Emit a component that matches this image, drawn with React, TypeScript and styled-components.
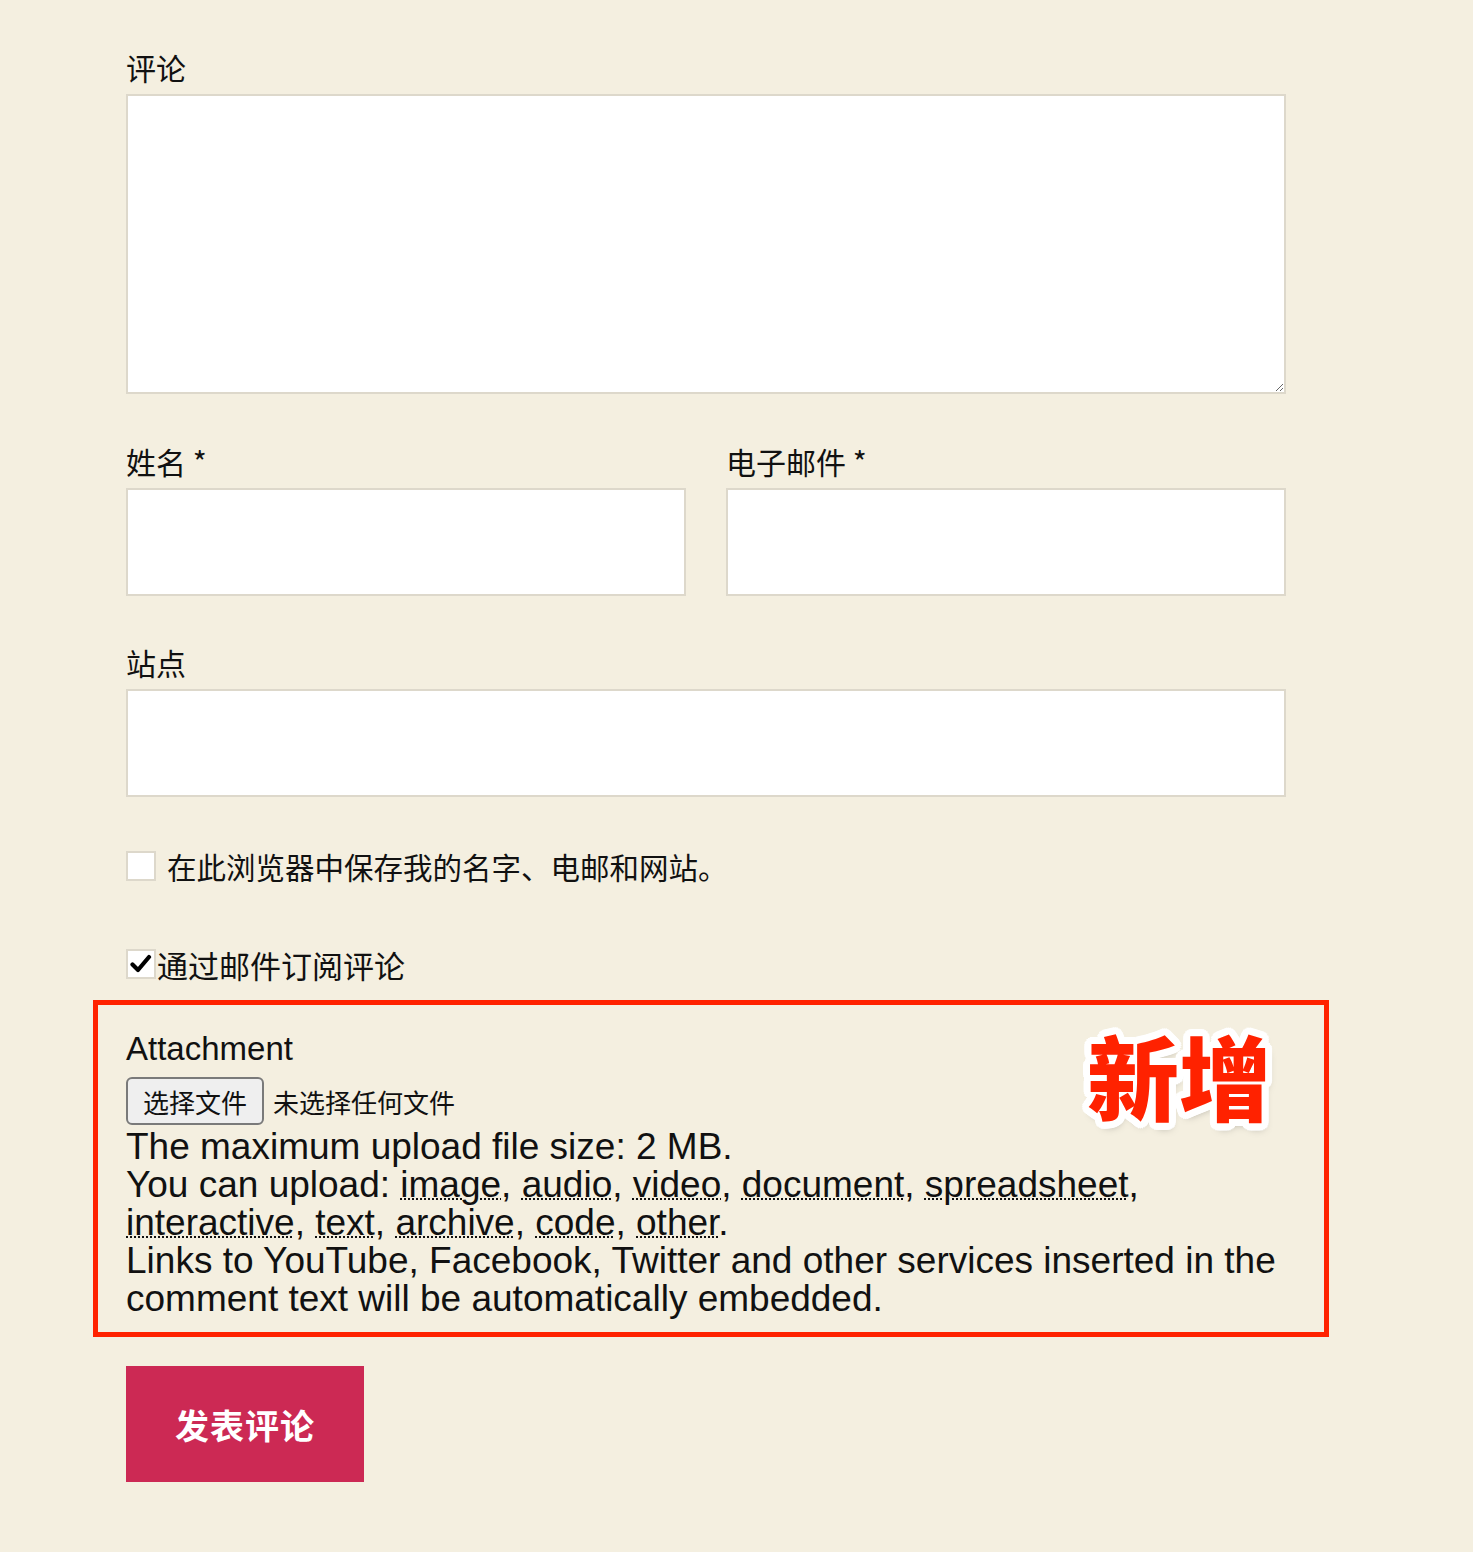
import styled, { createGlobalStyle } from 'styled-components'

const CJK = `"Noto Sans CJK SC", "Noto Sans", sans-serif`
const LATIN = `"Liberation Sans", "Noto Sans CJK SC", sans-serif`

const GlobalStyle = createGlobalStyle`
  html, body {
    margin: 0;
    padding: 0;
    background: #f4efe0;
  }
  body {
    font-family: ${CJK};
    color: #111;
  }
`

const stickerOutline = (() => {
  const parts: string[] = []
  for (let i = 0; i < 24; i++) {
    const a = (i / 24) * Math.PI * 2
    parts.push(`${(Math.cos(a) * 7).toFixed(1)}px ${(Math.sin(a) * 7).toFixed(1)}px 0 #fff`)
  }
  parts.push('2px 5px 8px rgba(0, 0, 0, 0.35)')
  return parts.join(', ')
})()

const uploadTypes = ['image', 'audio', 'video', 'document', 'spreadsheet', 'interactive', 'text', 'archive', 'code', 'other']

export default function App() {
  return (
    <>
      <GlobalStyle />
      <Page>
        <Form>
          <Field>
            <Label>评论</Label>
            <TextArea />
          </Field>

          <Row>
            <Field>
              <Label>姓名 *</Label>
              <Input />
            </Field>
            <Field>
              <Label>电子邮件 *</Label>
              <Input />
            </Field>
          </Row>

          <Field $spaced>
            <Label>站点</Label>
            <Input />
          </Field>

          <CheckRow $first>
            <Box />
            <CheckText>在此浏览器中保存我的名字、电邮和网站。</CheckText>
          </CheckRow>

          <CheckRow>
            <Box>
              <svg width="22" height="20" viewBox="0 0 22 20">
                <path d="M2.5 10.5 L8 16 L19 3" fill="none" stroke="#000" strokeWidth="4.2" strokeLinecap="round" strokeLinejoin="round" />
              </svg>
            </Box>
            <CheckText $tight>通过邮件订阅评论</CheckText>
          </CheckRow>

          <Attachment>
            <Sticker>新增</Sticker>
            <AttachTitle>Attachment</AttachTitle>
            <FileRow>
              <FileButton type="button">选择文件</FileButton>
              <FileName>未选择任何文件</FileName>
            </FileRow>
            <Note>
              The maximum upload file size: 2 MB.
              <br />
              You can upload:{' '}
              {uploadTypes.map((t, i) => (
                <span key={t}>
                  <Abbr title={t}>{t}</Abbr>
                  {i < uploadTypes.length - 1 ? ', ' : '.'}
                </span>
              ))}
              <br />
              Links to YouTube, Facebook, Twitter and other services inserted in the comment text will be automatically embedded.
            </Note>
          </Attachment>

          <Submit type="button">发表评论</Submit>
        </Form>
      </Page>
    </>
  )
}

const Page = styled.div`
  padding: 48px 0 70px 126px;
`

const Form = styled.div`
  width: 1160px;
  display: flex;
  flex-direction: column;
`

const Field = styled.div<{ $spaced?: boolean }>`
  display: flex;
  flex-direction: column;
  flex: 1;
  margin-top: ${({ $spaced }) => ($spaced ? '47px' : '0')};
`

const Row = styled.div`
  display: flex;
  gap: 40px;
  margin-top: 48px;
`

const Label = styled.label`
  font-size: 30px;
  line-height: 39px;
  margin-bottom: 7px;
  font-family: ${CJK};
`

const TextArea = styled.textarea`
  box-sizing: border-box;
  height: 300px;
  width: 100%;
  background: #fff;
  border: 2px solid #ddd8cb;
  resize: vertical;
  outline: none;
  margin: 0;
`

const Input = styled.input`
  box-sizing: border-box;
  height: 108px;
  width: 100%;
  background: #fff;
  border: 2px solid #ddd8cb;
  outline: none;
  margin: 0;
`

const CheckRow = styled.div<{ $first?: boolean }>`
  display: flex;
  align-items: center;
  height: 40px;
  margin-top: ${({ $first }) => ($first ? '49px' : '58px')};
`

const Box = styled.span`
  box-sizing: border-box;
  width: 30px;
  height: 30px;
  background: #fff;
  border: 2px solid #ddd8cb;
  display: flex;
  align-items: center;
  justify-content: center;
  flex-shrink: 0;
`

const CheckText = styled.span<{ $tight?: boolean }>`
  font-size: ${({ $tight }) => ($tight ? '31px' : '29.5px')};
  margin-left: ${({ $tight }) => ($tight ? '1px' : '11px')};
  font-family: ${CJK};
  white-space: nowrap;
`

const Attachment = styled.div`
  position: relative;
  margin: 16px -43px 0 -33px;
  padding: 25px 43px 14px 28px;
  border: 5px solid #ff2200;
`

const Sticker = styled.div`
  position: absolute;
  top: 18px;
  right: 53px;
  font-family: ${CJK};
  font-weight: 900;
  font-size: 92px;
  line-height: 1.1;
  color: #ff2200;
  text-shadow: ${stickerOutline};
`

const AttachTitle = styled.div`
  font-family: ${LATIN};
  font-size: 33px;
  line-height: 38px;
`

const FileRow = styled.div`
  display: flex;
  align-items: center;
  margin-top: 9px;
`

const FileButton = styled.button`
  box-sizing: border-box;
  height: 48px;
  padding: 0 15px;
  font-family: ${CJK};
  font-size: 26px;
  color: #111;
  background: #efefef;
  border: 2px solid #7a7a7a;
  border-radius: 6px;
`

const FileName = styled.span`
  font-family: ${CJK};
  font-size: 26px;
  margin-left: 9px;
`

const Note = styled.div`
  font-family: ${LATIN};
  font-size: 37px;
  line-height: 38px;
  margin-top: 3px;
`

const Abbr = styled.abbr`
  text-decoration: underline dotted;
  text-decoration-thickness: 1.5px;
  text-underline-offset: 1px;
  cursor: help;
`

const Submit = styled.button`
  align-self: flex-start;
  width: 238px;
  height: 116px;
  margin-top: 29px;
  background: #cc2954;
  color: #fff;
  border: none;
  font-family: ${CJK};
  font-weight: 700;
  font-size: 34px;
  letter-spacing: 1px;
`
